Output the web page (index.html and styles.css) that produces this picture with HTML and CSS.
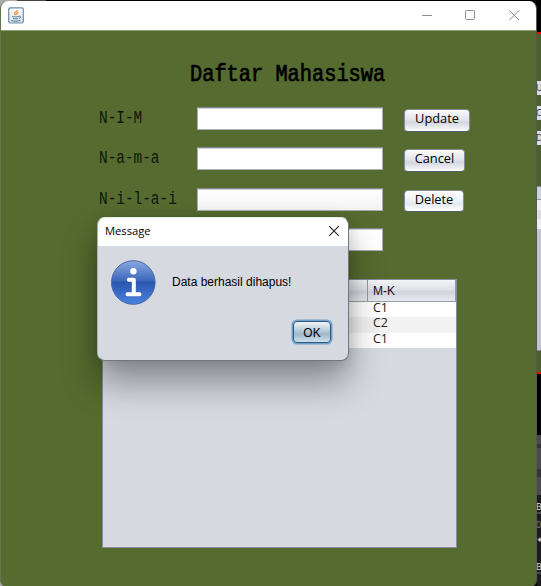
FILE: index.html
```html
<!DOCTYPE html>
<html lang="id">
<head>
<meta charset="utf-8">
<title>Daftar Mahasiswa</title>
<link rel="stylesheet" href="styles.css">
</head>
<body>
<div class="desktop">
  <main class="window">
    <header class="titlebar">
      <svg class="java" width="16" height="17" viewBox="0 0 16 17">
        <defs><linearGradient id="tile" x2="0" y2="1"><stop stop-color="#fff"/><stop offset="1" stop-color="#d3dde6"/></linearGradient></defs>
        <rect x=".7" y=".8" width="14.6" height="15.2" rx="1.5" fill="url(#tile)" stroke="#6b8ba8" stroke-width="1.2"/>
        <path d="M9.300 3c.6 1.600-3.400 2-2.800 3.600.2.700 1 1 1.100 1.600M10.300 5.300c-1.600.7-2 1.300-1.300 2.400" fill="none" stroke="#ee8c31" stroke-width="1.300"/>
        <path d="M4.200 9.500c2 .5 5 .4 6.600 0M5 11.400c2 .5 4 .5 5.300 0M3.300 13.600c2.500.8 6.700.7 9-.1M11 9.200c2.200-.5 2.300 1.700 0 2.200" fill="none" stroke="#527b9e"/>
      </svg>
      <svg class="controls" width="102" height="12" viewBox="0 0 102 12" fill="none" stroke="#8e8e8e">
        <path d="M1 6.500h10M88.500 1.500l9.500 9.500M98 1.500l-9.500 9.500"/>
        <rect x="44.500" y="1.500" width="9" height="9" rx="1"/>
      </svg>
    </header>
    <section class="content">
      <h1 class="title"><span>Daftar Mahasiswa</span></h1>
      <form class="form">
        <div class="row"><label><span>N-I-M</span></label><div class="field"></div><button type="button" class="btn update">Update</button></div>
        <div class="row"><label><span>N-a-m-a</span></label><div class="field"></div><button type="button" class="btn cancel">Cancel</button></div>
        <div class="row"><label><span>N-i-l-a-i</span></label><div class="field shaded"></div><button type="button" class="btn delete">Delete</button></div>
        <div class="row"><label></label><div class="field"></div></div>
      </form>
      <div class="grid">
        <div class="head"><span class="rest"></span><span class="mk">M-K</span></div>
        <div class="item">C1</div>
        <div class="item alt">C2</div>
        <div class="item">C1</div>
      </div>
    </section>
  </main>
  <aside class="behind">
    <div class="black top"></div>
    <div class="olive">
      <div class="peek">U</div><div class="peek">C</div><div class="peek">D</div>
      <div class="list"><div class="lhead"></div><div class="lrow"></div><div class="lrow lalt"></div><div class="lrow"></div></div>
    </div>
    <div class="black mid"></div>
    <div class="editor">
      <div class="bar"></div><div class="bar second"></div>
      <div class="code"><b>B</b><i>0</i><em>✦</em><b>B</b></div>
    </div>
  </aside>
  <section class="dialog">
    <header class="dialog-head"><span>Message</span>
      <svg width="12" height="12" viewBox="0 0 12 12" fill="none" stroke="#222" stroke-width="1.100"><path d="M1.200 1.200l9.600 9.600M10.800 1.200l-9.600 9.600"/></svg>
    </header>
    <div class="message">
      <svg width="46" height="46" viewBox="0 0 46 46">
        <defs><linearGradient id="info" x2="0" y2="1"><stop stop-color="#89a9df"/><stop offset=".46" stop-color="#3b68bb"/><stop offset=".5" stop-color="#2956b0"/><stop offset="1" stop-color="#4d82e2"/></linearGradient></defs>
        <circle cx="23.300" cy="22.500" r="21.800" fill="url(#info)" stroke="#4867a4"/>
        <circle cx="23.400" cy="11.300" r="3.200" fill="#fff"/>
        <path d="M18.800 19.700h5V34M17.500 34.200h12" fill="none" stroke="#fff" stroke-width="4" stroke-linecap="round" stroke-linejoin="round"/>
      </svg>
      <p>Data berhasil dihapus!</p>
    </div>
    <button type="button" class="ok">OK</button>
  </section>
</div>
</body>
</html>
```
FILE: styles.css
```css
* { box-sizing: border-box; }
body { margin: 0; background: #000; }
.desktop { position: relative; display: flex; width: 541px; height: 586px; overflow: hidden; padding-top: 1px; background: linear-gradient(90deg, #aaa 0 17px, #444 17px 46px, #000 46px); }
.window { width: 537px; height: 586px; border-radius: 8px 8px 7px 7px; overflow: hidden; background: #556b2f; border-right: 1px solid #56594d; border-left: 1px solid #647847; flex: none; }
.titlebar { display: flex; justify-content: space-between; height: 30px; margin-left: -1px; padding: 6px 13px 0 8px; background: #fff; border-bottom: 1px solid #8c9e72; }
.controls { margin-top: 2px; }
.content { padding: 29px 0 0 98px; }
.title { margin: 0; padding: 2px 0 0 91px; height: 47px; font: 23px/27px "Liberation Mono", monospace; color: #000; -webkit-text-stroke: .7px #000; }
.title span { display: inline-block; transform: scaleX(.884); transform-origin: left; white-space: nowrap; }
.form { margin: 0; }
.row { display: grid; grid-template-columns: 98px 186px 1fr; height: 40.3px; align-items: start; }
.row label { font: 18px/22px "Liberation Mono", monospace; color: #10160a; }
.row label span { display: inline-block; transform: scaleX(.8); transform-origin: left; white-space: nowrap; }
.field { height: 23px; background: #fff; border: 1px solid #a9acb3; border-top-color: #858991; box-shadow: inset 0 1px #cfcfd3; }
.shaded { background: linear-gradient(#fff, #f3f3f3); }
.btn { margin: 2px 0 0 21px; padding: 0 0 5px; height: 22.500px; border: 1px solid #858b94; border-bottom-color: #56606f; border-radius: 4px; background: linear-gradient(#fafafb, #e1e4e9 45%, #d3d7de 60%, #fafbfd); font: 12.800px/16px "Open Sans", sans-serif; color: #000; }
.update { width: 66px; }
.cancel { width: 61px; }
.delete { width: 60px; background: linear-gradient(#fff, #edf0f5 50%, #e5e9f0 65%, #fff); }
.grid { width: 355px; height: 269px; margin: 11px 0 0 3px; border: 1px solid #858c9b; background: #d6d9e0; font: 12px/15px "Liberation Sans", sans-serif; }
.head { display: flex; height: 22px; background: linear-gradient(#f4f5f7, #dfe1e6 45%, #d1d4db 55%, #e7e9ee); border-bottom: 1px solid #989ea9; }
.rest { width: 265px; border-right: 1px solid #9298a3; }
.mk { padding: 4px 0 0 5px; color: #111; flex: 1; border-right: 1px solid #9298a3; }
.item { height: 15.300px; padding-left: 270px; background: #fff; font: 12.500px/12px "Open Sans", sans-serif; color: #222; }
.alt { background: #f2f2f2; }
.behind { width: 4px; overflow: hidden; }
.top { height: 31px; }
.black { background: #000; }
.olive { height: 342px; padding-top: 47px; border-top: 2px solid #f00; border-bottom: 2px solid #f00; background: #4c602b; }
.peek { height: 14px; margin-bottom: 11px; overflow: hidden; background: #d9dce1; font: 9px/14px "Open Sans", sans-serif; color: #333; text-indent: -1px; }
.list { height: 165px; margin-top: 41px; background: #c2c5cd; border: solid #858a96; border-width: 1px 0; }
.lhead { height: 13px; border-bottom: 1px solid #8c919c; background: #ccd0d7; }
.lrow { height: 9.600px; background: #eee; }
.lalt { background: #ddd; }
.mid { height: 61px; }
.editor { height: 152px; background: #4a4a4a; }
.bar { height: 13px; border-bottom: 4px solid #333; }
.second { height: 29px; border-bottom: 8px solid #333; }
.code { height: 92px; margin-top: 18px; padding-top: 4px; background: #1c1c1c; color: #ddd; font: 9px/15px "Open Sans", sans-serif; text-indent: -1px; }
.code b, .code i, .code em { display: block; font-style: normal; font-weight: normal; width: 4px; height: 15px; overflow: hidden; }
.code b { background: linear-gradient(#4a4a4a 0 0) bottom / 100% 2px no-repeat; }
.code i { margin-top: 3px; color: #888; }
.code em { height: 27px; color: #bbb; }
.dialog { position: absolute; left: 97px; top: 217px; width: 252px; height: 144px; border-radius: 8px; overflow: hidden; background: #d6d9e0; border: 1px solid #72777d; border-top-color: #e8eae5; border-left-color: #acb0ad; box-shadow: 0 22px 34px rgba(0,0,0,.36), 0 1px 14px rgba(0,0,0,.12); }
.dialog-head { display: flex; justify-content: space-between; align-items: center; height: 28px; padding: 0 8px 2px 7px; background: #fff; font: 11.200px/20px "Open Sans", sans-serif; color: #000; }
.message { display: flex; align-items: center; height: 46px; margin: 14px 0 0 12px; }
.message p { margin: 0 0 0 16px; padding-bottom: 2px; font: 12px/16px "Liberation Sans", sans-serif; color: #000; }
.ok { display: block; width: 38px; height: 22px; margin: 15px 0 0 195px; padding: 2px 0 0; border: 1px solid #305778; border-radius: 4px; background: linear-gradient(#f0f5f8, #b6cad8 45%, #9fb8c9 60%, #cce1ee); box-shadow: 0 0 0 1.500px #70a0ce; font: 12px/18px "Liberation Sans", sans-serif; color: #000; }
```
